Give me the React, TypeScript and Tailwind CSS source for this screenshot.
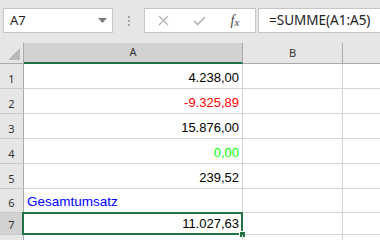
import React from "react";

type Row = { n: number; v?: string; color?: string; label?: string; h: string; sel?: boolean };

const rows: Row[] = [
  { n: 1, v: "4.238,00", color: "text-black", h: "h-[25px]" },
  { n: 2, v: "-9.325,89", color: "text-[#ff0000]", h: "h-[25px]" },
  { n: 3, v: "15.876,00", color: "text-black", h: "h-[25px]" },
  { n: 4, v: "0,00", color: "text-[#00ff00]", h: "h-[25px]" },
  { n: 5, v: "239,52", color: "text-black", h: "h-[25px]" },
  { n: 6, label: "Gesamtumsatz", h: "h-[24px]" },
  { n: 7, v: "11.027,63", color: "text-black", h: "h-[22px]", sel: true },
  { n: 8, h: "h-[25px]" },
];

export default function App() {
  return (
    <div className="w-[380px] h-[240px] overflow-hidden bg-white">
      {/* Formula bar */}
      <div className="h-[43px] bg-[#e6e6e6] flex items-start pt-[8px] pl-[3px] font-['Noto_Sans',sans-serif] text-[13px]">
        <div className="w-[110px] h-[25px] bg-white border border-[#c6c6c6] flex items-center justify-between pl-[6px] pr-[5px] text-[#222]">
          <span className="leading-none">A7</span>
          <svg width="9" height="5" viewBox="0 0 9 5">
            <polygon points="0,0 9,0 4.5,5" fill="#7a7a7a" />
          </svg>
        </div>
        <div className="w-[31px] h-[25px] flex flex-col items-center justify-center gap-[2px]">
          <span className="w-[2px] h-[2px] bg-[#a6a6a6]" />
          <span className="w-[2px] h-[2px] bg-[#a6a6a6]" />
          <span className="w-[2px] h-[2px] bg-[#a6a6a6]" />
        </div>
        <div className="w-[112px] h-[25px] bg-white border border-[#c6c6c6] flex items-center">
          <div className="w-[36px] flex justify-center">
            <svg width="11" height="11" viewBox="0 0 11 11">
              <path d="M1 1 L10 10 M10 1 L1 10" stroke="#b4b4b4" strokeWidth="1.3" fill="none" />
            </svg>
          </div>
          <div className="w-[36px] flex justify-center">
            <svg width="13" height="10" viewBox="0 0 13 10">
              <path d="M1 5 L4.5 8.5 L12 1" stroke="#b4b4b4" strokeWidth="1.6" fill="none" />
            </svg>
          </div>
          <div className="w-[36px] flex justify-center font-['Liberation_Serif',serif] italic text-[#444] leading-none">
            <span className="text-[14px]">f</span>
            <span className="text-[11px] mt-[3px]">x</span>
          </div>
        </div>
        <div className="ml-[2px] flex-1 h-[25px] bg-white border border-r-0 border-[#c6c6c6] flex items-center pl-[10px] text-[#222] text-[13.5px]">
          <span className="leading-none">=SUMME(A1:A5)</span>
        </div>
      </div>

      {/* Column headers */}
      <div className="flex h-[21px] bg-[#e6e6e6] font-['Noto_Sans',sans-serif] text-[11px] text-[#333]">
        <div className="w-[24px] shrink-0 border-r border-b border-[#ababab] relative">
          <svg className="absolute left-0 top-0" width="23" height="20" viewBox="0 0 23 20">
            <polygon points="20,5 20,17 8,17" fill="#b9b9b9" />
          </svg>
        </div>
        <div className="w-[219px] shrink-0 bg-[#d2d2d2] border-r border-r-[#ababab] border-b-2 border-b-[#217346] flex items-center justify-center">
          A
        </div>
        <div className="w-[100px] shrink-0 border-r border-b border-[#ababab] flex items-center justify-center">
          B
        </div>
        <div className="flex-1 border-b border-[#ababab]" />
      </div>

      {/* Rows */}
      {rows.map((r) => (
        <div key={r.n} className={`flex ${r.h}`}>
          <div
            className={`w-[24px] shrink-0 border-r border-r-[#ababab] border-b border-b-[#c8c8c8] flex items-end justify-center pb-[2px] font-['Noto_Sans',sans-serif] text-[11px] text-[#333] ${
              r.sel ? "bg-[#d2d2d2]" : "bg-[#e6e6e6]"
            }`}
          >
            <span className="leading-[15px]">{r.n}</span>
          </div>
          <div className="w-[219px] shrink-0 border-r border-b border-[#d4d4d4] relative flex items-end pb-[3px] px-[3px] font-['Liberation_Sans',sans-serif] text-[13px]">
            {r.label ? (
              <span className="text-[#0000ff] leading-[15px] text-[13.5px]">{r.label}</span>
            ) : r.v ? (
              <span className={`ml-auto leading-[15px] ${r.color}`}>{r.v}</span>
            ) : null}
            {r.sel && (
              <>
                <div className="absolute -left-[2px] -top-[1px] -right-[1px] -bottom-[1px] border-2 border-[#217346]" />
                <div className="absolute -right-[4px] -bottom-[4px] w-[7px] h-[7px] bg-[#217346] border border-white" />
              </>
            )}
          </div>
          <div className="w-[100px] shrink-0 border-r border-b border-[#d4d4d4]" />
          <div className="flex-1 border-b border-[#d4d4d4]" />
        </div>
      ))}
    </div>
  );
}
